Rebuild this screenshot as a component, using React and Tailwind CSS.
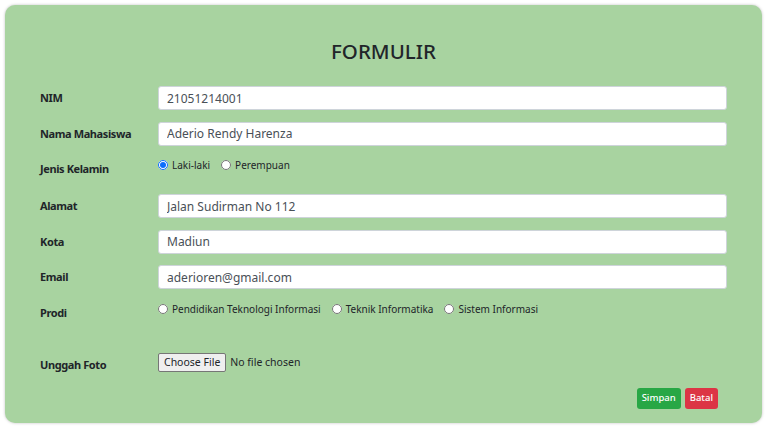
import React from 'react';

const font = { fontFamily: '"Noto Sans", "Open Sans", sans-serif' };

function TextRow({ label, value }) {
  return (
    <div className="flex items-start h-[24px] mb-[11.5px]">
      <label className="w-[118px] shrink-0 pt-[4px] leading-4 text-[11px] tracking-[-0.4px] font-bold text-[#212529]">{label}</label>
      <input
        readOnly
        value={value}
        className="flex-1 h-[24px] bg-white border border-[#ced4da] rounded-[3px] px-[8px] text-[12px] text-[#495057] outline-none"
      />
    </div>
  );
}

function Radio({ name, label, checked }) {
  return (
    <label className="flex items-center gap-[4px] mr-[11px] text-[10px] text-[#212529]">
      <input type="radio" name={name} defaultChecked={checked} className="m-0 w-[10px] h-[10px] accent-[#0d6efd]" />
      {label}
    </label>
  );
}

export default function App() {
  return (
    <div className="min-h-screen bg-white pt-[5px] pl-[5px] pr-[4px] pb-[5px]" style={font}>
      <div className="h-[418px] rounded-[10px] bg-[#a8d3a0] shadow-[0_0_3px_rgba(0,0,0,0.25)] px-[35px]">
        <h1 className="pt-[33px] pb-[22px] text-center text-[20.5px] leading-[26px] font-medium text-[#212529]">FORMULIR</h1>

        <TextRow label="NIM" value="21051214001" />
        <TextRow label="Nama Mahasiswa" value="Aderio Rendy Harenza" />

        <div className="flex items-start h-[25px] mb-[12px]">
          <label className="w-[118px] shrink-0 pt-[4px] leading-4 text-[11px] tracking-[-0.4px] font-bold text-[#212529]">Jenis Kelamin</label>
          <div className="flex leading-4">
            <Radio name="jk" label="Laki-laki" checked />
            <Radio name="jk" label="Perempuan" />
          </div>
        </div>

        <TextRow label="Alamat" value="Jalan Sudirman No 112" />
        <TextRow label="Kota" value="Madiun" />
        <TextRow label="Email" value="aderioren@gmail.com" />

        <div className="flex items-start h-[40px] mb-[12px]">
          <label className="w-[118px] shrink-0 pt-[4px] leading-4 text-[11px] tracking-[-0.4px] font-bold text-[#212529]">Prodi</label>
          <div className="flex leading-4">
            <Radio name="prodi" label="Pendidikan Teknologi Informasi" />
            <Radio name="prodi" label="Teknik Informatika" />
            <Radio name="prodi" label="Sistem Informasi" />
          </div>
        </div>

        <div className="flex items-start h-[24px]">
          <label className="w-[118px] shrink-0 pt-[4px] leading-4 text-[11px] tracking-[-0.4px] font-bold text-[#212529]">Unggah Foto</label>
          <input type="file" className="text-[10.5px] text-[#212529] file:mr-[4px] file:px-[5px] file:py-[1px] file:border file:border-[#767676] file:rounded-[2px] file:bg-[#efefef] file:text-[10.5px]" />
        </div>

        <div className="flex justify-end gap-[4px] mt-[11px] pr-[9px]">
          <button className="h-[21px] px-[5px] rounded-[3px] bg-[#28a745] text-white text-[9.5px] font-medium">Simpan</button>
          <button className="h-[21px] px-[5px] rounded-[3px] bg-[#dc3545] text-white text-[9.5px] font-medium">Batal</button>
        </div>
      </div>
    </div>
  );
}
